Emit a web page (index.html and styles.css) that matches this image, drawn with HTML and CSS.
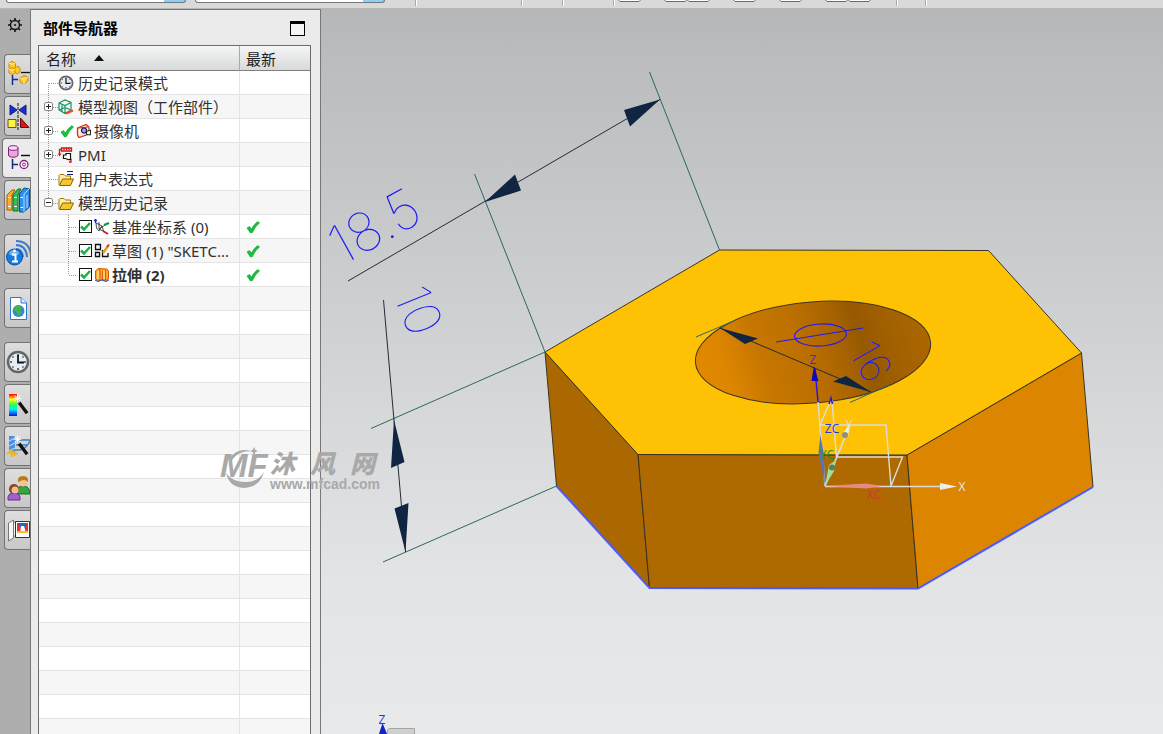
FILE: index.html
```html
<!DOCTYPE html>
<html lang="zh-CN">
<head>
<meta charset="utf-8">
<title>部件导航器</title>
<link rel="stylesheet" href="styles.css">
</head>
<body>
<svg class="defs" aria-hidden="true">
  <symbol id="check" viewBox="0 0 14 14"><path d="M1 8 3.500 6.500 5.500 9 Q8 4 12 1.500 L13.500 3 Q9 6.500 6.500 12.500 L4.500 13Z" fill="#12c43c" stroke="#0a9a2a" stroke-width=".6"/></symbol>
  <symbol id="guide-top" viewBox="0 0 19 24"><path d="M9.500 12V24M10 12.500H19" class="dots"/></symbol>
  <symbol id="guide-mid" viewBox="0 0 19 24"><path d="M9.500 0V24M10 12.500H19" class="dots"/></symbol>
  <symbol id="guide-plus" viewBox="0 0 19 24"><path d="M9.500 0V24M14 12.500H19" class="dots"/><rect x="5.500" y="7.500" width="8" height="8" rx="1.500" fill="#fff" stroke="#888"/><path d="M7 11.500H12M9.500 9V14" stroke="#222"/></symbol>
  <symbol id="guide-minus" viewBox="0 0 19 24"><path d="M9.500 0V8M14 12.500H19" class="dots"/><rect x="5.500" y="7.500" width="8" height="8" rx="1.500" fill="#fff" stroke="#888"/><path d="M7 11.500H12" stroke="#222"/></symbol>
  <symbol id="guide-sub" viewBox="0 0 38 24"><path d="M29.500 0V24M30 12.500H38" class="dots"/></symbol>
  <symbol id="guide-end" viewBox="0 0 38 24"><path d="M29.500 0V12M30 12.500H38" class="dots"/></symbol>
  <symbol id="folder" viewBox="0 0 16 16"><path d="M1 14V4.500L2 3.500H6L7.500 5H12.500V8" fill="#fff0a0" stroke="#a07a10"/><path d="M1.500 14.500 4.500 8H15.500L12.500 14.500Z" fill="#f6c62c" stroke="#8a6400"/></symbol>
  <symbol id="clock" viewBox="0 0 24 24"><circle cx="12" cy="12" r="10" fill="#e4edf6" stroke="#656565" stroke-width="2.500"/><g stroke="#444" stroke-width="1.500"><path d="M12 4V6M12 18V20M4 12H6M18 12H20M6.500 6.500 7.500 7.500M17.500 6.500 16.500 7.500M6.500 17.500 7.500 16.500M17.500 17.500 16.500 16.500"/></g><path d="M12 5V12.500H18" fill="none" stroke="#10151c" stroke-width="1.800"/></symbol>
  <symbol id="wand" viewBox="0 0 24 24"><path d="M12 8 21 20" stroke="#111" stroke-width="3.500"/><path d="M10 5 13 9" stroke="#bbb" stroke-width="3"/><path d="M11 0V9M7 4.500H15M8 1.500 14 7.500M14 1.500 8 7.500" stroke="#fff" stroke-width="1"/></symbol>
</svg>

<header class="toolbar">
  <select class="combo combo-first" aria-label="类型过滤器"></select>
  <select class="combo" aria-label="选择范围"></select>
  <svg class="tool-strip" viewBox="0 0 560 8" width="560" height="8">
    <g stroke="#fff"><path d="M31.500 0V6M137.500 0V6M178.500 0V6M229.500 0V6M512.500 0V6M541.500 0V6"/></g>
    <g stroke="#aaa"><path d="M30.500 0V6M136.500 0V6M177.500 0V6M228.500 0V6M511.500 0V6M540.500 0V6"/></g>
    <g fill="#fff" stroke="#6a6a6a"><path d="M233.500-2V0L235 1.500H254L255.500 0V-2ZM279.500-2V0L281 1.500H300L301.500 0V-2ZM302.500-2V0L304 1.500H323L324.500 0V-2ZM348.500-2V0L350 1.500H369L370.500 0V-2ZM394.500-2V0L396 1.500H415L416.500 0V-2ZM440.500-2V0L442 1.500H461L462.500 0V-2ZM463.500-2V0L465 1.500H484L485.500 0V-2Z"/></g>
  </svg>
</header>

<div class="workspace">
  <nav class="rail" aria-label="资源条">
    <button class="gear" aria-label="选项"><svg width="14" height="14" viewBox="0 0 14 14"><circle cx="7" cy="7" r="4.500" fill="none" stroke="#111" stroke-width="1.400"/><circle cx="7" cy="7" r="1" fill="#111"/><path d="M7 0V2M7 12V14M0 7H2M12 7H14M2 2 3.500 3.500M12 2 10.500 3.500M2 12 3.500 10.500M12 12 10.500 10.500" stroke="#111" stroke-width="1.600"/></svg></button>
    <div class="tabs">
    <button class="tab" aria-label="装配导航器"><svg viewBox="0 0 24 28"><g fill="#ffc928" stroke="#c77e00" stroke-width=".8"><path d="M3 3 6 1.500 9.500 3V8L6.500 9.500 3 8Z"/><path d="M3 9 6 7.500 9.500 9V13L6.500 14.500 3 13Z"/><path d="M9 8 12 6 14 8V12L11 14 9 12Z"/><path d="M14 18 18 15.500 22 17V21L18 24 14 22Z"/></g><path d="M3 3 6.500 4.500 9.500 3M3 9 6.500 10.500 9.500 9M14 18 18 19.500 22 17M18 19.500V24" stroke="#fff2a0" fill="none"/><path d="M6.500 15V25M6.500 19.500H12" stroke="#152a9c" stroke-width="1.500"/><path d="M15 12.500H24" stroke="#111" stroke-width="1.300"/></svg></button>
    <button class="tab" aria-label="约束导航器"><svg viewBox="0 0 24 28"><path d="M4 3 11 8 4 13ZM20 3 13 8 20 13Z" fill="#1a2ed0" stroke="#101a80"/><path d="M12 1V28" stroke="#111" stroke-dasharray="3 1"/><path d="M2 17.500H10V25.500H2Z" fill="#fff34a" stroke="#6a5800"/><path d="M14.500 16V25.500H23Z" fill="#d81818" stroke="#6a0a0a"/></svg></button>
    <button class="tab active" aria-label="部件导航器"><svg viewBox="0 0 24 28"><path d="M2.500 4V11C2.500 14 12 14 12 11V4" fill="#e6a8dc" stroke="#8b1c7c"/><ellipse cx="7.200" cy="4" rx="4.800" ry="2.300" fill="#f7ddf3" stroke="#8b1c7c"/><path d="M6.500 15V25M6.500 20.500H12" stroke="#152a6c" stroke-width="1.500"/><path d="M15 11.500H24" stroke="#111" stroke-width="1.500"/><circle cx="18" cy="20.500" r="4" fill="#fff" stroke="#8b1c7c" stroke-width="1.300"/><circle cx="18" cy="20.500" r="1.500" fill="none" stroke="#8b1c7c"/></svg></button>
    <button class="tab" aria-label="重用库"><svg viewBox="0 0 24 28"><path d="M1 9 6 4H9L6 9V24H1Z" fill="#ffad2e" stroke="#ad5a00"/><path d="M7 9 12 3H15L12 9V25H7Z" fill="#35bb57" stroke="#0b7026"/><path d="M13.500 8 18 2 23.500 3V21L18 26H13.500Z" fill="#2f8ee8" stroke="#0c4ca0"/><path d="M2 11.500H5M2 20.500H5M8 11.500H11M8 20.500H11M14.500 11.500H17M14.500 21.500H17" stroke="#fff"/><path d="M18 8V26M18 8 23 3M21 9V22" stroke="#b5dcff"/></svg></button>
    </div>
    <div class="tabs">
    <button class="tab" aria-label="信息工具"><svg viewBox="0 0 24 28"><g fill="none" stroke="#3b78ca" stroke-width="2"><path d="M10 9Q16 9 17 17M10 5Q20 5 21 17M10 1Q24 1 25 16"/></g><circle cx="8.500" cy="17" r="8" fill="#167ade" stroke="#0a4fac"/><ellipse cx="8" cy="13" rx="5" ry="3" fill="#6bb5f7"/><path d="M6 14.500H9.500V21M6 21.500H12" stroke="#fff" stroke-width="2" fill="none"/><circle cx="8.500" cy="11" r="1.400" fill="#fff"/></svg></button>
    </div>
    <div class="tabs">
    <button class="tab" aria-label="浏览器"><svg viewBox="0 0 24 28"><path d="M4.500 3.500H15L20.500 9V25.500H4.500Z" fill="#fff" stroke="#3274c8"/><path d="M15 3.500V9H20.500" fill="#dcecff" stroke="#3274c8"/><circle cx="12.500" cy="17" r="6" fill="#3487d8"/><path d="M9 13Q12 9 16 14L14 16 16 19 12 22 10 17 7 17Z" fill="#45b549"/></svg></button>
    </div>
    <div class="tabs">
    <button class="tab" aria-label="历史记录"><svg viewBox="0 0 24 24"><use href="#clock"/></svg></button>
    <button class="tab" aria-label="系统材料"><svg viewBox="0 0 24 28"><defs><linearGradient id="rainbow" x2="0" y2="1"><stop stop-color="#f00"/><stop offset=".25" stop-color="#ff0"/><stop offset=".5" stop-color="#2f5"/><stop offset=".7" stop-color="#0ef"/><stop offset="1" stop-color="#11d"/></linearGradient></defs><path d="M3 4H11V26H3Z" fill="url(#rainbow)"/><use href="#wand" x="1" y="4" width="23" height="23"/></svg></button>
    <button class="tab" aria-label="加工向导"><svg viewBox="0 0 24 28"><path d="M3 4H9V20H3Z" fill="#4c91dc"/><path d="M3 9 9 6M3 14 9 11M3 19 9 16" stroke="#c4e3ff"/><path d="M9 8H24M24 9Q20 17 14 18H9M10 13H22" fill="none" stroke="#3f7dc2" stroke-width="1.500"/><path d="M1 22 5 19 6 25M9 24 7 20 12 22" stroke="#f0b418" stroke-width="2" fill="none"/><use href="#wand" x="1" y="3" width="23" height="23"/></svg></button>
    <button class="tab" aria-label="角色"><svg viewBox="0 0 24 28"><path d="M11 20Q10 12 17 12T24 20Z" fill="#36a540" stroke="#15702a"/><circle cx="17" cy="8" r="4.500" fill="#f5c48d"/><path d="M12 8Q11 2 17 2T22 8Q19 4 12 8Z" fill="#b97918"/><path d="M2 26Q1 19 8 19T14 26Z" fill="#a35ed0" stroke="#6c2a98"/><circle cx="8" cy="15" r="5" fill="#87451d"/><circle cx="9" cy="16" r="3.500" fill="#f3bd91"/></svg></button>
    <button class="tab" aria-label="系统场景"><svg viewBox="0 0 24 28"><path d="M2.500 7 7.500 4V22L2.500 25ZM7.500 6H10V20H7.500" fill="#f6f6f6" stroke="#777"/><path d="M9.500 5.500H23.500V21.500H9.500Z" fill="#fff" stroke="#333"/><path d="M11 7H22V17H11Z" fill="#e23422"/><path d="M12 7H21L19 11H14Z" fill="#2465c9"/><path d="M14 17 15 10H18L20 17Z" fill="#fff"/><path d="M11 16H22" stroke="#f8bb31" stroke-width="2"/></svg></button>
    </div>
  </nav>

  <aside class="panel">
    <div class="panel-head">
      <h1>部件导航器</h1>
      <button class="maximize" aria-label="最大化"></button>
    </div>
    <div class="tree">
      <table>
        <colgroup><col class="col-name"><col></colgroup>
        <thead><tr><th>名称 <svg class="sort" width="10" height="6" viewBox="0 0 10 6"><path d="M0 6 5 0 10 6Z"/></svg></th><th>最新</th></tr></thead>
        <tbody>
          <tr><td><div class="cell"><svg class="g1"><use href="#guide-top"/></svg><svg class="ico"><use href="#clock"/></svg><span>历史记录模式</span></div></td><td></td></tr>
          <tr><td><div class="cell"><svg class="g1"><use href="#guide-plus"/></svg><svg class="ico" viewBox="0 0 16 16"><path d="M1 4 7 1 13 3.500V11L7 14.500 1 11ZM1 4 7 6.500 13 3.500M7 6.500V14M1 11 7 8.500 13 11M4 5V12.500" fill="none" stroke="#189565" stroke-width="1.200"/><path d="M8 14.500 15 11.500" stroke="#ee4a1c" stroke-width="2"/></svg><span>模型视图（工作部件）</span></div></td><td></td></tr>
          <tr><td><div class="cell cell-marked"><svg class="g1"><use href="#guide-plus"/></svg><svg class="mark"><use href="#check"/></svg><svg class="ico" viewBox="0 0 16 16"><path d="M1.500 5 10 1.500 13 4V11L3 14.500 1.500 12Z" fill="#ffe9e0" stroke="#d52f12" stroke-width="1.300"/><path d="M2 5 12 4" stroke="#d52f12"/><circle cx="8" cy="7.500" r="2.500" fill="#9ba4f0" stroke="#181b52" stroke-width="1.200"/><path d="M10.500 8.500 14.500 7V12L10.500 11.500Z" fill="#eee" stroke="#222"/></svg><span>摄像机</span></div></td><td></td></tr>
          <tr><td><div class="cell"><svg class="g1"><use href="#guide-plus"/></svg><svg class="ico" viewBox="0 0 16 16"><path d="M3.500 1H13.500V4H3.500ZM3.500 2.500H1.500V8M6 1V3M8.500 1V3M11 1V3M10 12.500H13V15H11" fill="none" stroke="#cc1616" stroke-width="1.300"/><path d="M0 6.500H3.500L1.700 9.500Z" fill="#cc1616"/><path d="M5.500 11.500V8H8V6.500H12.500V12.500H10L7.500 11.500Z" fill="#fff" stroke="#111" stroke-width="1.200"/></svg><span>PMI</span></div></td><td></td></tr>
          <tr><td><div class="cell"><svg class="g1"><use href="#guide-mid"/></svg><svg class="ico" viewBox="0 0 16 16"><use href="#folder"/><path d="M9 .5H15M9 3.500H15" stroke="#1a1a70"/></svg><span>用户表达式</span></div></td><td></td></tr>
          <tr><td><div class="cell"><svg class="g1"><use href="#guide-minus"/></svg><svg class="ico"><use href="#folder"/></svg><span>模型历史记录</span></div></td><td></td></tr>
          <tr><td><div class="cell cell-tight"><svg class="g2"><use href="#guide-sub"/></svg><input type="checkbox" id="n1" checked><svg class="ico" viewBox="0 0 16 16"><path d="M2 4 8 7 5 12 2.500 9ZM5 3V10L10 12.500M5 10 12 5.500M8 7 9.500 12" fill="none" stroke="#444"/><path d="M1.500 0V4M0 1.500H3" stroke="#1b22d4" stroke-width="1.300"/><path d="M10 6 15 4" stroke="#0a9a38" stroke-width="2"/><path d="M9 12 14 15" stroke="#d01b2b" stroke-width="2"/></svg><label for="n1">基准坐标系 (0)</label></div></td><td><svg class="mark"><use href="#check"/></svg></td></tr>
          <tr><td><div class="cell cell-tight"><svg class="g2"><use href="#guide-sub"/></svg><input type="checkbox" id="n2" checked><svg class="ico" viewBox="0 0 16 16"><path d="M1.500 1.500H6.500V6.500H1.500ZM1.500 9.500H5.500V13.500H1.500ZM8.500 7V13.500H14V10" fill="none" stroke="#111" stroke-width="1.300"/><path d="M9 10 14 3" stroke="#e0a318" stroke-width="2.500"/><path d="M13 4 15 1.500" stroke="#d8351e" stroke-width="2"/></svg><label for="n2">草图 (1) "SKETC...</label></div></td><td><svg class="mark"><use href="#check"/></svg></td></tr>
          <tr><td><div class="cell cell-tight"><svg class="g2"><use href="#guide-end"/></svg><input type="checkbox" id="n3" checked><svg class="ico" viewBox="0 0 16 16"><path d="M1.500 4 4 1.500 13 2 14.500 4V12L12 13.500 8 12.500 4 13.500 1.500 12Z" fill="#ffa827" stroke="#d65a0a"/><path d="M6 2V12M8.500 4V13M11.500 3V13" stroke="#dc5c10"/><path d="M4 4V12M10 4V12" stroke="#ffe69a" stroke-width="1.300"/><path d="M1 13 4 14.500 8 13 12 14.500 15 13" fill="none" stroke="#2441c4"/></svg><label for="n3" class="current">拉伸 (2)</label></div></td><td><svg class="mark"><use href="#check"/></svg></td></tr>
        </tbody>
      </table>
      <div class="filler"></div>
    </div>
  </aside>

  <main class="viewport">
    <svg class="scene" viewBox="321 9 842 725" preserveAspectRatio="xMinYMin meet">
      <defs>
        <linearGradient id="bore" x1="0" x2="1" y1=".5" y2=".4"><stop stop-color="#e38900"/><stop offset=".12" stop-color="#dc8500"/><stop offset=".27" stop-color="#c77700"/><stop offset=".45" stop-color="#bd7000"/><stop offset=".6" stop-color="#aa6500"/><stop offset=".71" stop-color="#965900"/><stop offset=".85" stop-color="#a36100"/><stop offset="1" stop-color="#ac6700"/></linearGradient>
      </defs>
      <g stroke="#3a3424" stroke-width="1" stroke-linejoin="round">
        <path d="M545 352 638 454.500 649.500 588 556.500 486Z" fill="#ab6700"/>
        <path d="M638 454.500 907 455 918 588.500 649.500 588Z" fill="#ae6900"/>
        <path d="M907 455 1081.500 353 1093 487 918 588.500Z" fill="#db8500"/>
        <path d="M545 352 719.500 250 988.500 250.500 1081.500 353 907 455 638 454.500Z" fill="#ffc103"/>
        <ellipse cx="813" cy="352.500" rx="118" ry="50.500" transform="rotate(-5 813 352.500)" fill="url(#bore)"/>
      </g>
      <path d="M556.500 486 649.500 588 918 588.500 1093 487" fill="none" stroke="#4a5cff" stroke-width="2"/>
      <path d="M649.500 72 719.500 250M474.500 174 545 352M371 428.500 545 352M383 562 556.500 486M696 337 736 320M850 402.500 889 385" stroke="#2c6860" stroke-width="1"/>
      <path d="M348 281 660 99.500M383.500 300 405.500 552M720 328 871 392" stroke="#252b38" stroke-width="1"/>
      <path d="M660 99.500 624 110 630 126.500ZM485 202 515 174.500 521 190.500ZM394 420 391 468 404.500 462ZM405.500 552 394.500 508.500 408.500 503ZM720 328 745 344 758 338.500ZM871 392 833 381.500 846 376Z" fill="#102542"/>
      <g fill="none" stroke="#2718f0" stroke-width="1.100"><ellipse cx="820.500" cy="335" rx="26" ry="11" transform="rotate(-3 820.500 335)"/><path d="M776 342 863 328"/></g>
      <g class="dim">
        <text class="dim-large" transform="translate(342 266) rotate(-29)">18.5</text>
        <text class="dim-medium" transform="translate(393 295) rotate(68)">10</text>
        <text class="dim-small" transform="translate(848 352) rotate(60)">16</text>
      </g>
      <g fill="none" stroke="#dcdcdc" stroke-width="1.400">
        <path d="M825 486 818 402M820 425H886L891 486M836 457H902.500L891 486M832 400 836.500 457M820 425 831 400"/>
        <path d="M825 486 850 425M825 486.500H945" stroke-width="1.600"/>
      </g>
      <path d="M815 368 818 402M829 404 831 398 832.500 404" stroke="#3414d8" stroke-width="1.500" fill="none"/>
      <path d="M814 366 811.500 381H818.500Z" fill="#0c08c4"/>
      <path d="M940 483 957 486.500 940 490ZM843 433 850 423 848 437Z" fill="#eee"/>
      <path d="M825 486 818.500 452 820.500 435 824 455Z" fill="#5874b8"/>
      <path d="M825 486 829 465 836 460 834 471Z" fill="#9ee09c"/>
      <path d="M825 486 866 483.500 882 486 866 488.500Z" fill="#e58b83"/>
      <circle cx="845" cy="435" r="3" fill="#8f8c84"/><circle cx="832" cy="467.500" r="3" fill="#627a58"/>
      <g class="axis">
        <text x="813" y="364" fill="#4a24e0">Z</text>
        <text x="832" y="433" fill="#1c38e0">ZC</text>
        <text x="827" y="459" fill="#1c9420">YC</text>
        <text x="874" y="499" fill="#de2f35">XC</text>
        <text x="849" y="429" fill="#e4e0d0">Y</text>
        <text x="962" y="491" fill="#e8e8e8">X</text>
        <text x="382" y="724" fill="#2038dc">Z</text>
      </g>
      <path d="M382.500 723 379 734H387Z" fill="#1522c6"/>
      <path d="M387.500 734V730L389 728.500H414.500V734" fill="#cfcfcf" stroke="#a4a4a4"/>
    </svg>
  </main>
</div>

<div class="watermark">
  <svg width="50" height="44" viewBox="0 0 50 44"><path d="M8 13Q17 0 31 4 18 4 12 13ZM6 26Q9 40 24 41 40 40 44 25 38 35 26 35 12 35 6 26ZM34 0 35.500 3 38 4 35.500 5 34 8 32.500 5 30 4 32.500 3Z"/><text x="0" y="30">MF</text></svg>
  <div class="watermark-text"><strong><span>沐</span><span>风</span><span>网</span></strong><span>www.mfcad.com</span></div>
</div>
</body>
</html>
```

FILE: styles.css
```css
* { box-sizing: border-box; }
body {
  margin: 0;
  height: 100vh;
  display: flex;
  flex-direction: column;
  overflow: hidden;
  font: 15px/20px "Noto Sans", "Noto Sans CJK SC", sans-serif;
  color: #303030;
}
button { border: 0; padding: 0; background: none; font: inherit; }
.defs { display: none; }
.dots { fill: none; stroke: #999; stroke-dasharray: 1 1; }

.toolbar {
  height: 9px;
  flex: none;
  display: flex;
  align-items: flex-start;
  gap: 9px;
  padding-left: 6px;
  background: #d9d9d9;
  border-bottom: 1px solid #b7b7b7;
  overflow: hidden;
}
.combo {
  appearance: none;
  flex: none;
  width: 190px;
  height: 3px;
  padding: 0;
  border: 1px solid #777;
  border-top: 0;
  border-radius: 0 0 3px 3px;
  background: linear-gradient(to left, #8bd0f8 21px, #fff 21px);
}
.combo-first { width: 180px; }
.tool-strip { flex: none; margin-left: -9px; }

.workspace { flex: 1; min-height: 0; display: flex; }

.rail {
  width: 31px;
  flex: none;
  display: flex;
  flex-direction: column;
  align-items: flex-end;
  gap: 14px;
  background: #aeaeae;
  border-right: 1px solid #777;
}
.gear { width: 30px; height: 31px; display: grid; place-items: center; }
.tabs { display: flex; flex-direction: column; align-items: flex-end; gap: 2px; }
.tab {
  width: 26px;
  height: 40px;
  display: grid;
  place-items: center;
  border: 1px solid #737373;
  border-right: 0;
  border-radius: 4px 0 0 4px;
  background: linear-gradient(#dedede, #c8c8c8);
}
.tab svg { width: 24px; height: 28px; }
.tab.active {
  width: 29px;
  margin-right: -1px;
  padding-left: 2px;
  background: #ebebeb;
}

.panel {
  width: 290px;
  flex: none;
  display: flex;
  flex-direction: column;
  padding: 0 9px 0 7px;
  background: #ebebeb;
  border-top: 1px solid #777;
  border-right: 1px solid #777;
}
.panel-head {
  height: 35px;
  flex: none;
  display: flex;
  align-items: center;
  justify-content: space-between;
  padding: 1px 6px 0 5px;
}
h1 { margin: 0; font-size: 15px; line-height: 20px; color: #000; }
.maximize { width: 15px; height: 15px; border: 1px solid #000; border-top-width: 3px; background: #f5f5f5; }

.tree {
  flex: 1;
  min-height: 0;
  display: flex;
  flex-direction: column;
  border: 1px solid #6c6c6c;
  border-bottom: 0;
  background: #fff;
}
table { width: 100%; table-layout: fixed; border-spacing: 0; }
.col-name { width: 201px; }
th {
  height: 25px;
  padding: 2px 6px 0 7px;
  text-align: left;
  font-weight: 400;
  color: #202020;
  background: linear-gradient(#f5f6f6, #d7d9da);
  border-bottom: 1px solid #808080;
}
th:first-child { border-right: 1px solid #aaa; }
th + th { padding-left: 6px; }
.sort { margin: 0 0 4px 14px; fill: #111; }
td { height: 24px; padding: 0; border-bottom: 1px solid #e4e4e4; vertical-align: middle; }
td:first-child { border-right: 1px solid #e4e4e4; }
td + td { padding-left: 6px; }
tbody tr:nth-child(even) { background: #f6f6f6; }
.cell { height: 23px; display: flex; align-items: center; gap: 4px; white-space: nowrap; }
.cell-tight { gap: 2px; }
.cell-marked { gap: 2px; }
.cell svg { flex: none; }
.cell .g1 { height: 24px; width: 19px; margin-right: -4px; }
.cell .g2 { height: 24px; width: 38px; }
.cell-marked .g1 { margin-right: 0; }
.ico { width: 16px; height: 16px; }
.mark { display: block; width: 14px; height: 14px; }
.current { font-weight: 700; }
input[type="checkbox"] {
  appearance: none;
  flex: none;
  width: 13px;
  height: 13px;
  margin: 0;
  border: 1px solid #111;
  background: #fff;
}
input[type="checkbox"]:checked {
  background: #fff url("data:image/svg+xml,%3Csvg xmlns='http://www.w3.org/2000/svg' viewBox='0 0 11 11'%3E%3Cpath d='M1 5.500 4 8.500 10 2' fill='none' stroke='%2310b838' stroke-width='2.500'/%3E%3C/svg%3E") center / 11px 11px no-repeat;
}
.filler {
  flex: 1;
  background:
    linear-gradient(#e4e4e4, #e4e4e4) 200px 0 / 1px 100% no-repeat,
    repeating-linear-gradient(#f6f6f6 0 23px, #e4e4e4 23px 24px, #fff 24px 47px, #e4e4e4 47px 48px);
}

.viewport {
  flex: 1;
  min-width: 0;
  background: linear-gradient(#b6b7b8, #bbbcbd 7%, #c8c9ca 30%, #d2d3d4 48%, #d8d9da 58%, #e3e4e5 79%, #e8e9ea);
}
.scene { display: block; width: 100%; height: 100%; }
.dim { font-family: Inter, Lato, sans-serif; font-weight: 100; fill: #1a1af5; }
.dim-large { font-size: 54px; }
.dim-medium { font-size: 50px; }
.dim-small { font-size: 42px; }
.axis { font: 12px "Open Sans", sans-serif; text-anchor: middle; }

.watermark {
  position: absolute;
  left: 220px;
  top: 447px;
  display: flex;
  color: #a9a9a9;
  fill: #a9a9a9;
  pointer-events: none;
}
.watermark svg { font: italic 900 33px "Liberation Sans", sans-serif; }
.watermark-text { display: flex; flex-direction: column; font: 700 14px/14px "Liberation Sans", sans-serif; }
.watermark-text strong { display: flex; gap: 15px; font: italic 900 25px/30px "Noto Sans CJK SC", sans-serif; }
```
